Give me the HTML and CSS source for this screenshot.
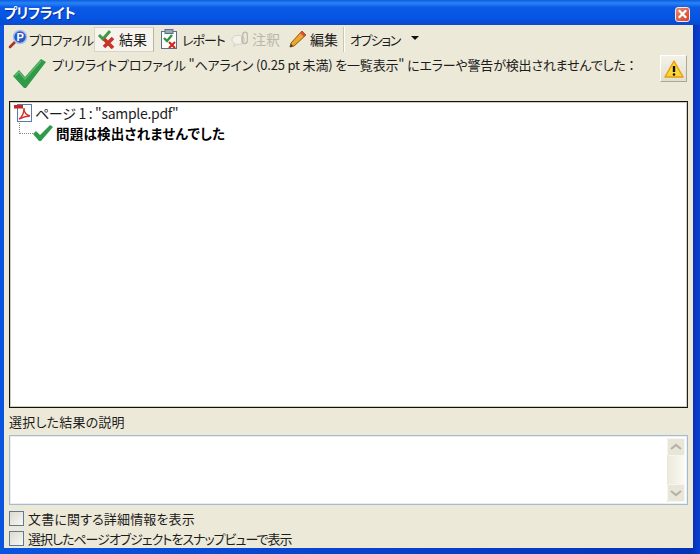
FILE: index.html
```html
<!DOCTYPE html>
<html lang="ja">
<head>
<meta charset="utf-8">
<title>プリフライト</title>
<link rel="stylesheet" href="styles.css">
</head>
<body>
<div class="window">
  <div class="titlebar">
    <span class="title">プリフライト</span>
    <span class="close"><svg width="14" height="14" viewBox="0 0 14 14"><path d="M3 3l8 8M11 3l-8 8" stroke="#fff" stroke-width="2.4" fill="none"/></svg></span>
  </div>
  <div class="content">
    <div class="toolbar">
      <div class="tool tool-first">
        <svg class="ticon" width="22" height="22" viewBox="0 0 22 22"><path d="M8 14l-5 5" stroke="#a8332a" stroke-width="2.600" stroke-linecap="round"/><circle cx="13" cy="9" r="6.500" fill="#2b57c8" stroke="#a9c0ea" stroke-width="1.500"/><text x="9.500" y="13" class="pglyph">P</text></svg>
        <span>プロファイル</span>
      </div>
      <div class="tool tool-active">
        <svg class="ticon" width="20" height="20" viewBox="0 0 20 20"><path d="M2 6l4 4 7-8" stroke="#3f9a45" stroke-width="3" fill="none"/><path d="M7 10l9 9M16 9l-9 9" stroke="#c8342a" stroke-width="3.600"/></svg>
        <span>結果</span>
      </div>
      <div class="tool tool-report">
        <svg class="ticon" width="20" height="22" viewBox="0 0 20 22"><rect x="2.500" y="3.500" width="15" height="17" fill="#fff" stroke="#5c6f8a"/><rect x="6" y="1.500" width="8" height="4" fill="#9aa7b8" stroke="#5c6f8a"/><path d="M5 10l3 3 5-6" stroke="#2f9440" stroke-width="2.400" fill="none"/><path d="M10 14l6 6M16 14l-6 6" stroke="#d02a20" stroke-width="2.200"/></svg>
        <span>レポート</span>
      </div>
      <div class="tool tool-disabled">
        <svg class="ticon" width="20" height="20" viewBox="0 0 22 20"><ellipse cx="8" cy="11" rx="7" ry="5" fill="#f4f2e8" stroke="#cfcdc0"/><path d="M4 15l-1 3 4-2" fill="#f4f2e8" stroke="#cfcdc0"/><path d="M13 13V5a2.500 2.500 0 0 1 5 0v7a3 3 0 0 1-6 0V7" fill="none" stroke="#bdbbae" stroke-width="1.500"/></svg>
        <span>注釈</span>
      </div>
      <div class="tool tool-edit">
        <svg class="ticon" width="20" height="20" viewBox="0 0 20 20"><path d="M3 14L14 2l4 4L6 17l-4 1z" fill="#efa52c" stroke="#8a5a14"/><path d="M14 2l4 4-2 2-4-4z" fill="#d8503a"/><path d="M2 18l1-3 2 2z" fill="#333"/></svg>
        <span>編集</span>
      </div>
      <div class="sep"></div>
      <div class="tool tool-options">
        <span>オプション</span>
        <span class="caret"></span>
      </div>
    </div>

    <div class="message">
      <svg class="bigcheck" width="36" height="36" viewBox="0 0 36 36"><path d="M1 21l6-6 6 7L29 4l5 3-20 26h-2z" fill="#2f9a47"/><path d="M3 21l4-4 6 7L29 6" stroke="#63bb70" stroke-width="1.200" fill="none"/></svg>
      <p class="msgtext">プリフライトプロファイル "ヘアライン (0.25 pt 未満) を一覧表示" にエラーや警告が検出されませんでした ：</p>
      <div class="warnbtn"><svg width="20" height="18" viewBox="0 0 20 18"><path d="M10 1L19 17H1z" fill="#fdd835" stroke="#e89a10" stroke-width="1.400" stroke-linejoin="round"/><path d="M10 6v6" stroke="#111" stroke-width="2.400"/><circle cx="10" cy="14.500" r="1.300" fill="#111"/></svg></div>
    </div>

    <div class="tree">
      <div class="row row-page">
        <svg width="18" height="18" viewBox="0 0 18 18"><rect x="3.500" y="0.500" width="14" height="17" fill="#fff" stroke="#5a7ab0"/><rect x="0" y="1" width="9" height="3.500" fill="#c8281e"/><path d="M5 15c3-2 5-6 5-11 0 5 2 7 6 8-4 0-7 1-11 3z" fill="none" stroke="#d4352a" stroke-width="1.400"/></svg>
        <span>ページ 1 : "sample.pdf"</span>
      </div>
      <div class="row row-issue">
        <span class="branch"></span>
        <svg width="20" height="16" viewBox="0 0 20 16"><path d="M0 9l3-3 4 4L17 0l3 2L8 16H6z" fill="#2f9a47"/></svg>
        <strong>問題は検出されませんでした</strong>
      </div>
    </div>

    <div class="label">選択した結果の説明</div>

    <div class="desc">
      <div class="scroll">
        <div class="sbtn"><svg width="12" height="8" viewBox="0 0 12 8"><path d="M1 6l5-4 5 4" stroke="#b5b3a8" stroke-width="2.200" fill="none"/></svg></div>
        <div class="strack"></div>
        <div class="sbtn"><svg width="12" height="8" viewBox="0 0 12 8"><path d="M1 2l5 4 5-4" stroke="#b5b3a8" stroke-width="2.200" fill="none"/></svg></div>
      </div>
    </div>

    <div class="checks">
      <div class="check"><span class="box"></span><span>文書に関する詳細情報を表示</span></div>
      <div class="check check-tight"><span class="box"></span><span>選択したページオブジェクトをスナップビューで表示</span></div>
    </div>
  </div>
</div>
</body>
</html>
```
FILE: styles.css
```css
* { box-sizing: border-box; }
html, body { margin: 0; padding: 0; }
body {
  width: 700px;
  height: 554px;
  overflow: hidden;
  font-family: "Noto Sans CJK JP", "Liberation Sans", sans-serif;
  font-size: 13px;
  font-feature-settings: "palt";
  color: #1c1c1c;
}
.window {
  width: 700px;
  height: 554px;
  display: flex;
  flex-direction: column;
  background: linear-gradient(90deg, #0a55e0 0, #0a55e0 4px, #0533b8 693px, #0a3fd0 700px);
}
.titlebar {
  height: 25px;
  flex: none;
  display: flex;
  align-items: center;
  justify-content: space-between;
  padding: 0 10px 0 4px;
  background: linear-gradient(180deg, #0a5ce0 0%, #2a84f4 12%, #0a5ae6 30%, #0553e2 75%, #0a49cc 100%);
}
.title {
  color: #fff;
  font-weight: 700;
  font-size: 14px;
  line-height: 25px;
  letter-spacing: -0.5px;
  text-shadow: 1px 1px 0 #0a2f9c;
}
.close {
  width: 15px;
  height: 15px;
  margin-top: 3px;
  display: flex;
  align-items: center;
  justify-content: center;
  border: 1px solid #f4e8e4;
  border-radius: 3px;
  background: linear-gradient(135deg, #e8866c, #d4422a);
}
.content {
  flex: 1;
  margin: 0 7px 6px 4px;
  padding: 0 5px;
  background: #ece9d8;
  display: flex;
  flex-direction: column;
}
.toolbar {
  height: 27px;
  flex: none;
  display: flex;
  align-items: center;
  padding-top: 1px;
}
.tool {
  display: flex;
  align-items: center;
  gap: 1px;
  height: 25px;
  flex: none;
  white-space: nowrap;
}
.tool-first { margin-left: -2px; width: 87px; gap: 0; letter-spacing: -0.9px; }
.tool-active {
  width: 60px;
  background: #f6f4ec;
  border: 1px solid #d8d5c4;
  border-right-color: #b8b5a2;
  padding: 0 2px;
  gap: 2px;
}
.tool-active span { font-size: 14px; }
.tool-report { width: 71px; margin-left: 5px; gap: 3px; letter-spacing: -1px; margin-right: 1px; }
.tool-disabled { color: #b9b7aa; width: 57px; gap: 1px; }
.tool-disabled span { font-size: 14px; }
.tool-edit { width: 55px; gap: 2px; }
.tool-edit span { font-size: 14px; }
.tool-options { gap: 11px; margin-left: 5px; letter-spacing: -1.500px; }
.sep { width: 2px; height: 25px; background: #c9c6b4; border-right: 1px solid #fff; flex: none; }
.ticon { flex: none; }
.pglyph { font: 700 11px "Liberation Sans", sans-serif; fill: #fff; }
.caret {
  width: 0;
  height: 0;
  border-left: 4px solid transparent;
  border-right: 4px solid transparent;
  border-top: 4px solid #111;
  margin-top: -3px;
}
.message {
  height: 49px;
  flex: none;
  display: flex;
  align-items: flex-start;
}
.bigcheck { flex: none; margin: 3px 4px 0 3px; }
.msgtext {
  flex: 1;
  margin: 3px 0 0;
  line-height: 19px;
  white-space: nowrap;
  letter-spacing: -0.17px;
}
.warnbtn {
  flex: none;
  width: 27px;
  height: 27px;
  margin: 3px 1px 0 0;
  display: flex;
  align-items: center;
  justify-content: center;
  background: linear-gradient(180deg, #f4f2e8, #e2dfce);
  border: 1px solid #fff;
  border-right-color: #a9a795;
  border-bottom-color: #a9a795;
}
.tree {
  height: 307px;
  flex: none;
  background: #fff;
  border: 1px solid #111;
  border-right-color: #222;
  box-shadow: 0 0 0 1px #cfccba inset;
  padding: 0 0 0 4px;
}
.row { display: flex; align-items: center; height: 21px; white-space: nowrap; }
.row-page { gap: 3px; }
.row-page span { font-size: 14px; letter-spacing: -0.3px; }
.row-issue { height: 19px; }
.row-issue strong { margin-left: 3px; font-size: 13.500px; letter-spacing: 0.25px; color: #000; }
.branch {
  width: 14px;
  height: 11px;
  margin: -9px 0 0 5px;
  border-left: 1px dotted #888;
  border-bottom: 1px dotted #888;
}
.label {
  height: 27px;
  flex: none;
  line-height: 27px;
  letter-spacing: 0.2px;
}
.desc {
  height: 70px;
  flex: none;
  background: #fff;
  border: 1px solid #a5bbd0;
  box-shadow: 0 0 0 1px #e8eef2 inset;
  display: flex;
  justify-content: flex-end;
  padding: 2px 2px 2px 0;
}
.scroll {
  width: 18px;
  display: flex;
  flex-direction: column;
  background: linear-gradient(90deg, #ece9d8, #fbfaf5);
}
.sbtn {
  height: 18px;
  flex: none;
  display: flex;
  align-items: center;
  justify-content: center;
  background: #e8e6d8;
  border: 1px solid #f6f5ee;
  border-radius: 2px;
}
.strack { flex: 1; }
.checks {
  flex: 1;
  display: flex;
  flex-direction: column;
  padding-top: 3px;
}
.check {
  display: flex;
  align-items: center;
  gap: 4px;
  height: 20px;
  white-space: nowrap;
  letter-spacing: 0.15px;
}
.check-tight { letter-spacing: -1px; }
.box {
  width: 15px;
  height: 15px;
  flex: none;
  border: 1px solid #5c7a9c;
  background: linear-gradient(135deg, #dcdad0, #f8f7f2);
}
```
